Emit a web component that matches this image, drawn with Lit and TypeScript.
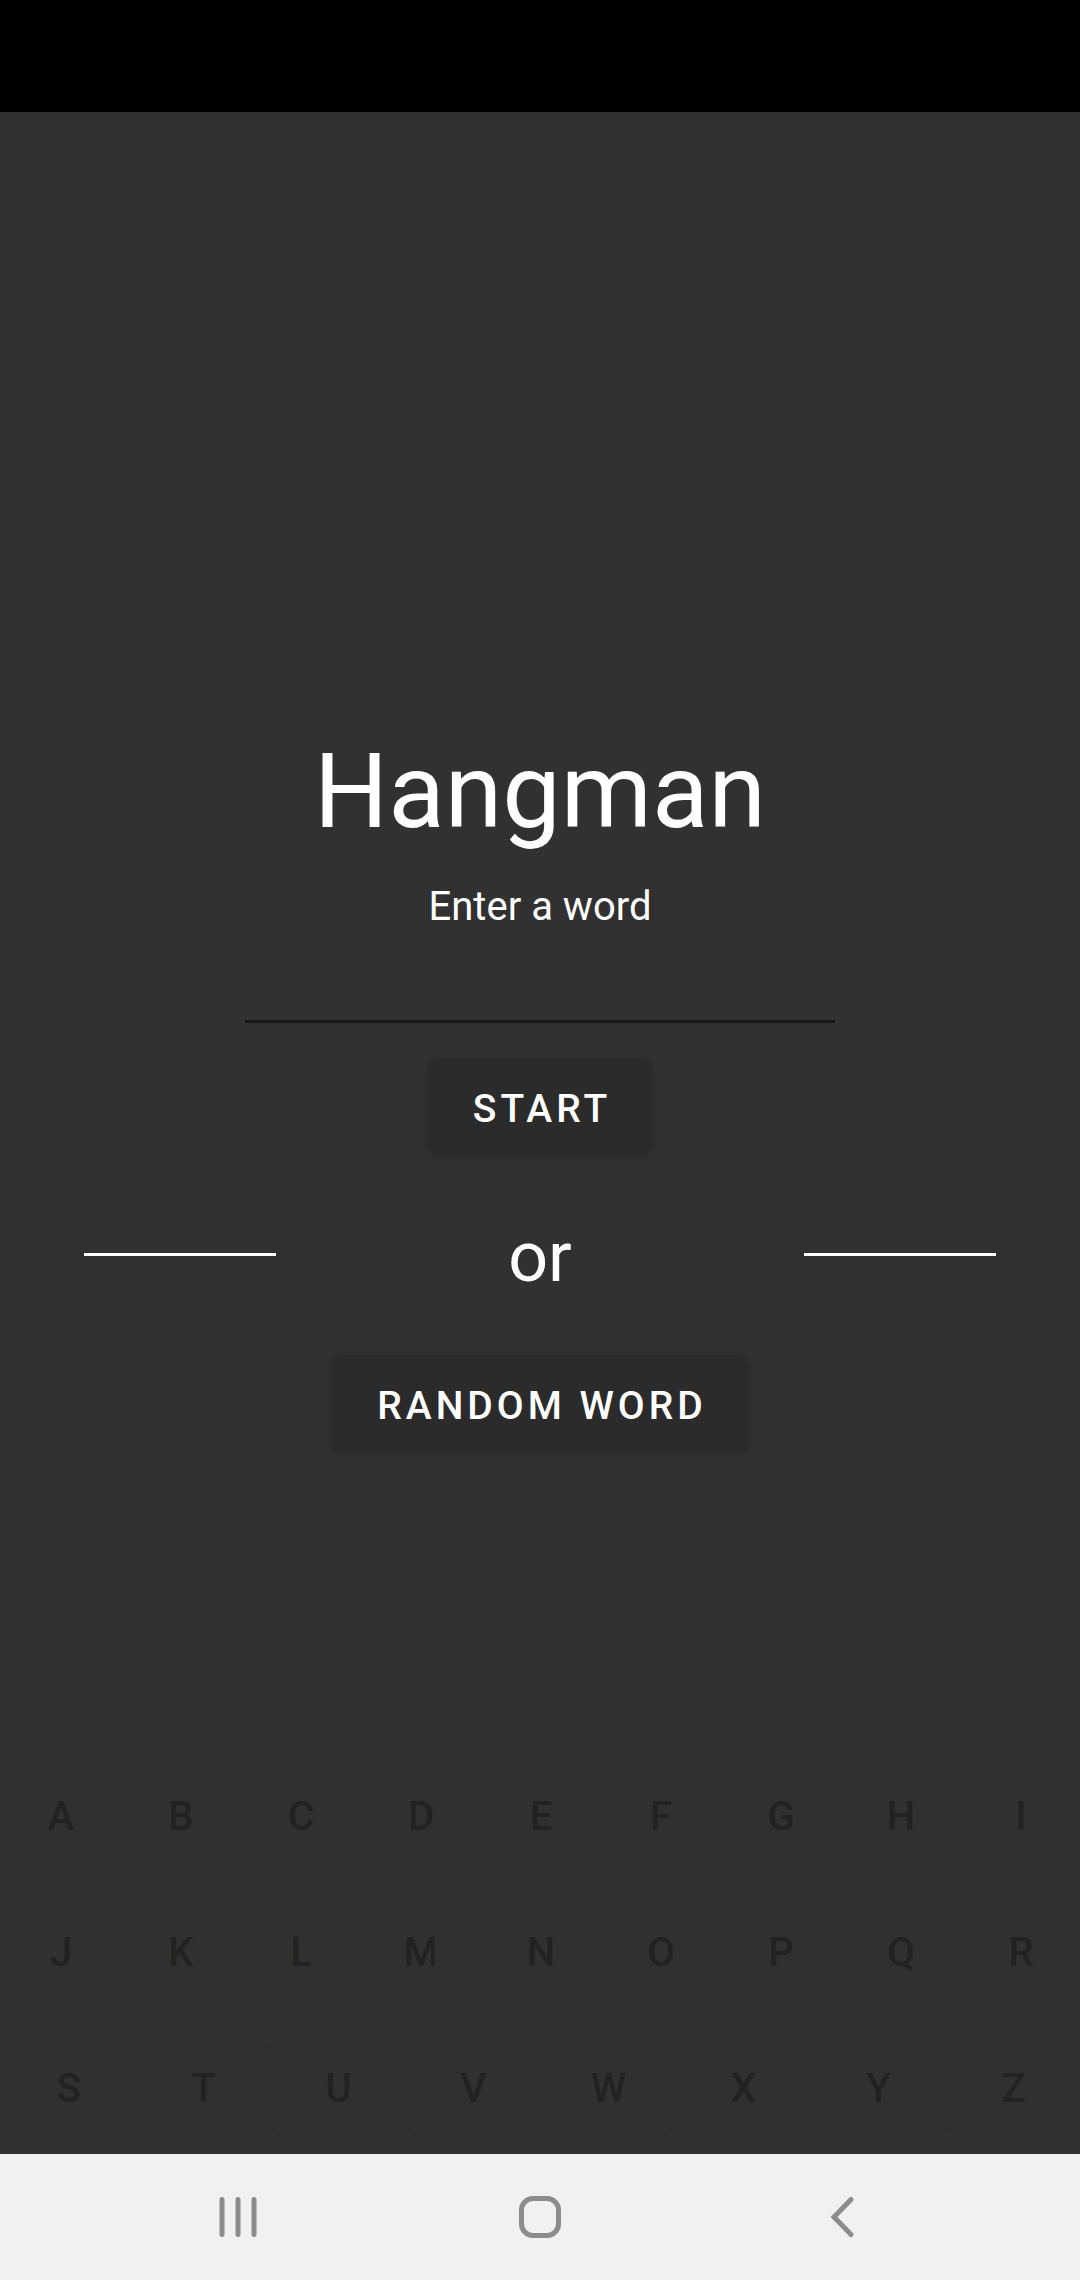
import { LitElement, html, css, svg } from "lit";
import { customElement, state } from "lit/decorators.js";
import { classMap } from "lit/directives/class-map.js";

const KEY_ROWS = ["ABCDEFGHI", "JKLMNOPQR", "STUVWXYZ"];

@customElement("letter-keyboard")
export class LetterKeyboard extends LitElement {
  static styles = css`
    :host {
      display: flex;
      flex-direction: column;
      gap: 40px;
      padding: 0 4px 20px;
    }
    .row {
      display: flex;
      gap: 8px;
    }
    .key {
      flex: 1 1 0;
      min-width: 0;
      height: 96px;
      margin: 0;
      padding: 6px 0 0 2px;
      border: 0;
      border-radius: 10px;
      background: #303030;
      color: #222222;
      box-shadow: 0 4px 6px rgba(0, 0, 0, 0.07);
      font: 500 40px/48px Roboto, sans-serif;
    }
    .letter {
      display: inline-block;
    }
    .clipped {
      clip-path: inset(0 4px 0 0);
    }
  `;

  render() {
    return html`${KEY_ROWS.map(
      (row) => html`<div class="row">
        ${[...row].map(
          (letter) => html`<button class="key" type="button" disabled>
            <span class=${classMap({ letter: true, clipped: letter === "M" })}>${letter}</span>
          </button>`
        )}
      </div>`
    )}`;
  }
}

@customElement("system-nav")
export class SystemNav extends LitElement {
  static styles = css`
    :host {
      display: flex;
      justify-content: center;
      align-items: center;
      gap: 222px;
      height: 126px;
      background: #f1f1f1;
    }
    .nav {
      display: flex;
      padding: 16px;
      margin: 0;
      border: 0;
      background: none;
      color: #8c8c8c;
    }
    .icon {
      width: 48px;
      height: 48px;
      fill: none;
      stroke: currentColor;
      stroke-width: 5;
    }
  `;

  render() {
    const items = [
      { label: "Recent apps", shape: svg`<path stroke-linecap="round" d="M8 6.500v35M24 6.500v35M40 6.500v35"/>` },
      { label: "Home", shape: svg`<rect x="5.500" y="5.500" width="37" height="37" rx="11.500"/>` },
      { label: "Back", shape: svg`<path stroke-linecap="round" d="M33 6.500L16 24L33 41.500"/>` },
    ];
    return html`${items.map(
      (item) => html`<button class="nav" type="button" aria-label=${item.label}>
        <svg class="icon" viewBox="0 0 48 48" aria-hidden="true">${item.shape}</svg>
      </button>`
    )}`;
  }
}

@customElement("app-root")
export class AppRoot extends LitElement {
  static styles = css`
    :host {
      display: flex;
      flex-direction: column;
      min-height: 100vh;
      background: #313131;
      color: #ffffff;
      font-family: Roboto, sans-serif;
    }
    .status {
      height: 112px;
      background: #000000;
    }
    .start {
      flex: 1;
      display: flex;
      flex-direction: column;
      align-items: center;
      justify-content: flex-end;
      padding-bottom: 315px;
    }
    .title {
      margin: 0;
      font-size: 104px;
      line-height: 140px;
      font-weight: 400;
    }
    .label {
      font-size: 40px;
      line-height: 48px;
      margin-top: 21px;
    }
    .word {
      box-sizing: border-box;
      width: 590px;
      max-width: 100%;
      height: 80px;
      margin: 12px 0 35px;
      padding: 0 8px;
      border: 0;
      border-bottom: 3px solid #181818;
      border-radius: 0;
      background: none;
      color: inherit;
      font: 400 40px/48px Roboto, sans-serif;
      text-align: center;
      outline: none;
    }
    .action {
      height: 96px;
      margin: 0;
      padding: 6px 42px 0 46px;
      border: 0;
      border-radius: 10px;
      background: #2b2b2b;
      color: inherit;
      box-shadow: 0 3px 6px rgba(0, 0, 0, 0.15);
      font: 500 39px/48px Roboto, sans-serif;
      letter-spacing: 4px;
    }
    .divider {
      box-sizing: border-box;
      display: flex;
      justify-content: space-between;
      align-items: center;
      width: 100%;
      margin: 58px 0;
      padding: 0 84px;
      font-size: 70px;
      line-height: 80px;
    }
    .or {
      padding-top: 5px;
    }
    .rule {
      width: 192px;
      height: 3px;
      background: #ffffff;
    }
  `;

  @state() private word = "";

  private onInput(event: Event) {
    this.word = (event.target as HTMLInputElement).value;
  }

  render() {
    return html`
      <div class="status"></div>
      <main class="start">
        <h1 class="title">Hangman</h1>
        <label class="label" for="word">Enter a word</label>
        <input class="word" id="word" type="text" autocomplete="off" .value=${this.word} @input=${this.onInput} />
        <button class="action" type="button">START</button>
        <div class="divider">
          <span class="rule"></span>
          <span class="or">or</span>
          <span class="rule"></span>
        </div>
        <button class="action" type="button">RANDOM WORD</button>
      </main>
      <letter-keyboard></letter-keyboard>
      <system-nav></system-nav>
    `;
  }
}
